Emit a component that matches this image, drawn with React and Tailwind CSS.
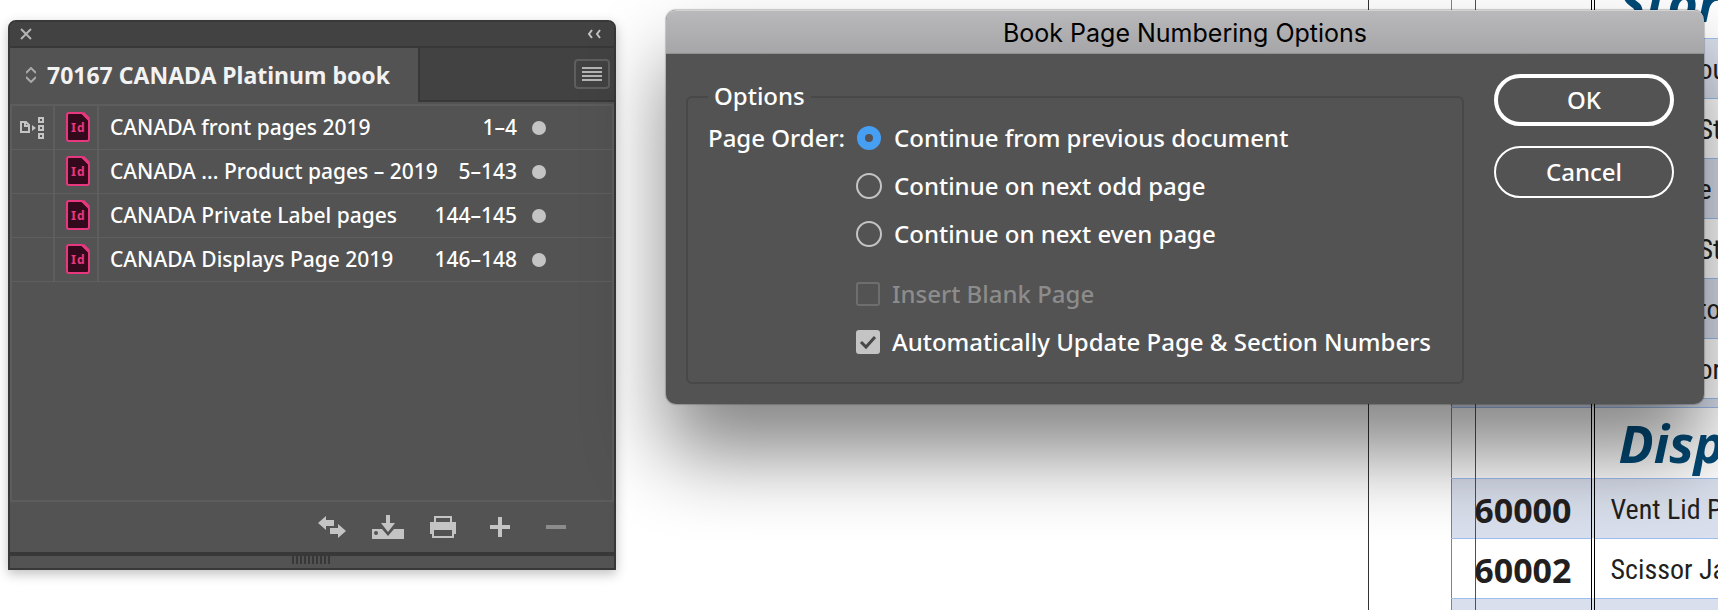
import { useState } from 'react';

const documents = [
    { name: 'CANADA front pages 2019', range: '1–4', source: true },
    { name: 'CANADA ... Product pages – 2019', range: '5–143' },
    { name: 'CANADA Private Label pages', range: '144–145' },
    { name: 'CANADA Displays Page 2019', range: '146–148' },
];

const pageOrders = [
    { value: 'previous', label: 'Continue from previous document' },
    { value: 'odd', label: 'Continue on next odd page' },
    { value: 'even', label: 'Continue on next even page' },
];

function StyleSourceIcon() {
    return (
        <svg width="24" height="22" viewBox="0 0 24 22" fill="none" stroke="#c4c4c4" strokeWidth="2">
            <path d="M1 5h5l3 3v7H1zM5 5v4h4" />
            <path d="M12 8l4 3-4 3z" fill="#c4c4c4" stroke="none" />
            <path d="M19 1h4v4h-4zM19 9h4v4h-4zM19 17h4v4h-4z" />
        </svg>
    );
}

function InDesignIcon() {
    return (
        <svg width="24" height="30" viewBox="0 0 24 30">
            <path d="M3 1h13l7 7v19a2 2 0 0 1-2 2H3a2 2 0 0 1-2-2V3a2 2 0 0 1 2-2z" fill="#330a1c" stroke="#e8377f" strokeWidth="2" />
            <path d="M17 1l6 6" stroke="#e8377f" strokeWidth="3" />
            <text x="5" y="20" fill="#e8377f" className="font-['Noto_Sans',sans-serif] text-[13px] font-bold">
                I
            </text>
            <text x="11" y="20" fill="#e8377f" className="font-['Noto_Sans',sans-serif] text-[12px] font-bold">
                d
            </text>
        </svg>
    );
}

function BookPanel() {
    return (
        <section className="absolute left-2 top-5 flex h-[550px] w-[608px] flex-col rounded-t-lg border-2 border-[#383838] bg-[#535353] font-['Noto_Sans',sans-serif] text-white shadow-[0_4px_12px_rgba(0,0,0,0.25)]">
            <div className="flex h-[26px] items-center justify-between rounded-t-md border-b-2 border-[#383838] bg-[#424242] px-[10px]">
                <button type="button" aria-label="Close">
                    <svg width="12" height="12" viewBox="0 0 12 12" stroke="#b4b4b4" strokeWidth="2">
                        <path d="M1 1l10 10M11 1L1 11" />
                    </svg>
                </button>
                <button type="button" aria-label="Collapse" className="mr-[3px]">
                    <svg width="14" height="10" viewBox="0 0 14 10" fill="none" stroke="#c4c4c4" strokeWidth="2">
                        <path d="M5 1L2 5l3 4M13 1l-3 4 3 4" />
                    </svg>
                </button>
            </div>

            <div className="flex h-[54px] bg-[#424242]">
                <div className="flex w-[408px] shrink-0 items-center gap-[11px] bg-[#535353] pl-4">
                    <svg width="10" height="16" viewBox="0 0 10 16" fill="none" stroke="#a8a8a8" strokeWidth="2" className="shrink-0">
                        <path d="M0 6l5-5 5 5M0 10l5 5 5-5" />
                    </svg>
                    <h2 className="whitespace-nowrap text-[23px] font-bold text-[#f2f2f2]">70167 CANADA Platinum book</h2>
                </div>
                <div className="flex flex-1 items-center justify-end border-b-2 border-l-2 border-[#383838] pr-1">
                    <button type="button" aria-label="Panel menu" className="flex h-[30px] w-9 items-center justify-center rounded border-2 border-[#5e5e5e]">
                        <svg width="20" height="14" viewBox="0 0 20 14" stroke="#b4b4b4" strokeWidth="2">
                            <path d="M0 1h20M0 5h20M0 9h20M0 13h20" />
                        </svg>
                    </button>
                </div>
            </div>

            <ul className="mt-[2px] flex-1 border-2 border-[#5d5d5d] text-[21px] font-medium">
                {documents.map((doc) => (
                    <li key={doc.name} className="flex h-11 items-center border-b border-[#5f5f5f]">
                        <span className="flex h-full w-[43px] shrink-0 items-center justify-center border-r-2 border-[#5d5d5d] pr-[2px]">
                            {doc.source && <StyleSourceIcon />}
                        </span>
                        <span className="flex h-full w-11 shrink-0 items-center border-r-2 border-[#5d5d5d] pb-[2px] pl-[11px]">
                            <InDesignIcon />
                        </span>
                        <span className="ml-[11px] flex-1 whitespace-nowrap">{doc.name}</span>
                        <span>{doc.range}</span>
                        <span className="ml-[15px] mr-[66px] size-[14px] rounded-full bg-[#c4c4c4]"></span>
                    </li>
                ))}
            </ul>

            <div className="flex h-[50px] items-center justify-end pr-12">
                <button type="button" aria-label="Synchronize" className="mr-[26px]">
                    <svg width="28" height="22" viewBox="0 0 28 22" fill="#c4c4c4">
                        <path d="M0 7l8-7v4h8v6H8v4zM28 15l-8-7v4h-8v6h8v4z" />
                    </svg>
                </button>
                <button type="button" aria-label="Save the book" className="mr-[26px]">
                    <svg width="32" height="24" viewBox="0 0 32 24" fill="#c4c4c4">
                        <path d="M14 0h4v8h5l-7 9-7-9h5z" />
                        <path fillRule="evenodd" d="M0 14h10l6 7 6-7h10v10H0zM4 16a2 2 0 1 0 0 4 2 2 0 0 0 0-4z" />
                    </svg>
                </button>
                <button type="button" aria-label="Print the book" className="mr-[34px]">
                    <svg width="26" height="22" viewBox="0 0 26 22" fill="#c4c4c4">
                        <path fillRule="evenodd" d="M4 0h18v6h4v12h-2v4H2v-4H0V6h4zM6 2v4h14V2zM4 14v6h18v-6z" />
                    </svg>
                </button>
                <button type="button" aria-label="Add documents" className="mr-9">
                    <svg width="20" height="20" viewBox="0 0 20 20" fill="#c4c4c4">
                        <path d="M8 0h4v8h8v4h-8v8H8v-8H0V8h8z" />
                    </svg>
                </button>
                <button type="button" aria-label="Remove documents" disabled>
                    <svg width="20" height="20" viewBox="0 0 20 20" fill="#8c8c8c">
                        <path d="M0 8h20v4H0z" />
                    </svg>
                </button>
            </div>

            <div className="flex h-4 justify-center border-t-4 border-[#383838] pr-[2px]">
                <svg width="38" height="8" viewBox="0 0 38 8" stroke="#383838" strokeWidth="2">
                    <path d="M1 0v8M5 0v8M9 0v8M13 0v8M17 0v8M21 0v8M25 0v8M29 0v8M33 0v8M37 0v8" />
                </svg>
            </div>
        </section>
    );
}

function Checkbox({ label, ...props }) {
    return (
        <label className="flex h-8 items-center gap-3 has-disabled:text-[#8c8c8c]">
            <span className="grid size-6 shrink-0">
                <input
                    type="checkbox"
                    className="peer col-start-1 row-start-1 size-6 appearance-none rounded-[3px] border-2 border-[#c4c4c4] checked:bg-[#c4c4c4] disabled:border-[#6e6e6e]"
                    {...props}
                />
                <svg viewBox="0 0 24 24" fill="none" stroke="#484848" strokeWidth="3" className="invisible pointer-events-none col-start-1 row-start-1 size-6 peer-checked:visible">
                    <path d="M5 12l5 5 9-10" />
                </svg>
            </span>
            {label}
        </label>
    );
}

function NumberingDialog() {
    const [order, setOrder] = useState('previous');
    const [autoUpdate, setAutoUpdate] = useState(true);

    return (
        <section
            role="dialog"
            aria-labelledby="numbering-title"
            className="absolute left-[666px] top-[10px] w-[1038px] rounded-[10px] bg-[#535353] font-['Noto_Sans',sans-serif] text-2xl font-medium text-white shadow-[0_0_1px_1px_rgba(0,0,0,0.2),0_50px_80px_rgba(0,0,0,0.48)]"
        >
            <h1
                id="numbering-title"
                className="flex h-11 items-center justify-center rounded-t-[10px] border-b border-t border-b-[#929192] border-t-[#d4d3d4] bg-linear-to-b from-[#b9b8ba] to-[#a6a5a7] pt-[3px] font-['Inter',sans-serif] text-[25px] font-normal text-black"
            >
                Book Page Numbering Options
            </h1>

            <div className="flex items-start px-5 pb-5 pt-5">
                <fieldset className="h-[310px] w-[778px] rounded-md border-2 border-[#484848] pl-5">
                    <legend className="h-[46px] px-[6px] leading-[44px]">Options</legend>
                    <div className="flex pt-[2px]">
                        <span className="w-[148px] shrink-0 leading-8">Page Order:</span>
                        <div className="flex flex-col gap-4">
                            {pageOrders.map((o) => (
                                <label key={o.value} className="flex h-8 items-center gap-3 whitespace-nowrap">
                                    <input
                                        type="radio"
                                        name="page-order"
                                        value={o.value}
                                        checked={order === o.value}
                                        onChange={() => setOrder(o.value)}
                                        className="size-[26px] shrink-0 appearance-none rounded-full border-2 border-[#c4c4c4] checked:mx-px checked:size-6 checked:border-8 checked:border-[#469ff2]"
                                    />
                                    {o.label}
                                </label>
                            ))}
                            <div className="mt-3 flex flex-col gap-4 whitespace-nowrap">
                                <Checkbox label="Insert Blank Page" disabled />
                                <Checkbox
                                    label="Automatically Update Page & Section Numbers"
                                    checked={autoUpdate}
                                    onChange={(e) => setAutoUpdate(e.target.checked)}
                                />
                            </div>
                        </div>
                    </div>
                </fieldset>

                <div className="ml-[30px] flex w-[180px] flex-col gap-5">
                    <button type="button" className="h-[52px] rounded-full border-4 border-white">
                        OK
                    </button>
                    <button type="button" className="h-[52px] rounded-full border-2 border-white">
                        Cancel
                    </button>
                </div>
            </div>
        </section>
    );
}

const catalogRows = [
    { desc: 'ou', tail: true },
    { desc: 'St', tail: true },
    { desc: 'e', tail: true },
    { desc: 'St', tail: true },
    { desc: 'to', tail: true },
    { desc: 'or', tail: true },
    { spacer: true },
    { heading: 'Displays' },
    { code: '60000', desc: 'Vent Lid P' },
    { code: '60002', desc: 'Scissor Jac' },
    {},
];

function CatalogHeading({ children }) {
    return (
        <tr className="h-[71px] border-b border-[#9dbfee]">
            <td className="border-r-4 border-double border-r-black p-0"></td>
            <td className="p-0 pl-6 text-[52px] font-bold italic leading-none text-[#004a77]">{children}</td>
        </tr>
    );
}

function CatalogPage() {
    return (
        <div className="relative ml-auto h-full w-[350px] overflow-hidden border-l border-[#333] pl-[82px] font-['Open_Sans',sans-serif] text-[#231f20]">
            <table className="-mt-[33px] w-[420px] table-fixed border-collapse border-l border-[#4a8fdc]">
                <colgroup>
                    <col className="w-[141px]" />
                    <col />
                </colgroup>
                <tbody>
                    <CatalogHeading>Storage</CatalogHeading>
                    {catalogRows.map((row, i) =>
                        row.heading ? (
                            <CatalogHeading key={i}>{row.heading}</CatalogHeading>
                        ) : (
                            <tr key={i} className={`border-b border-[#9dbfee] ${i % 2 === 0 ? 'bg-[#d9dfec]' : 'bg-white'} ${row.spacer ? 'h-[9px]' : 'h-[60px]'}`}>
                                <td className="border-r-4 border-double border-r-black p-0 pr-[19px] pt-[3px] text-right text-[34px] font-bold leading-none">{row.code}</td>
                                <td className={`whitespace-nowrap p-0 pt-1 font-['Roboto_Condensed','Liberation_Sans_Narrow',sans-serif] text-[28px] leading-none ${row.tail ? 'pl-[104px]' : 'pl-4'}`}>
                                    {row.desc}
                                </td>
                            </tr>
                        ),
                    )}
                </tbody>
            </table>
            {/* margin guide */}
            <div className="absolute inset-y-0 left-[106px] w-px bg-[#8a1fb5]"></div>
        </div>
    );
}

export default function App() {
    return (
        <main className="relative h-screen overflow-hidden bg-white">
            <CatalogPage />
            <BookPanel />
            <NumberingDialog />
        </main>
    );
}
